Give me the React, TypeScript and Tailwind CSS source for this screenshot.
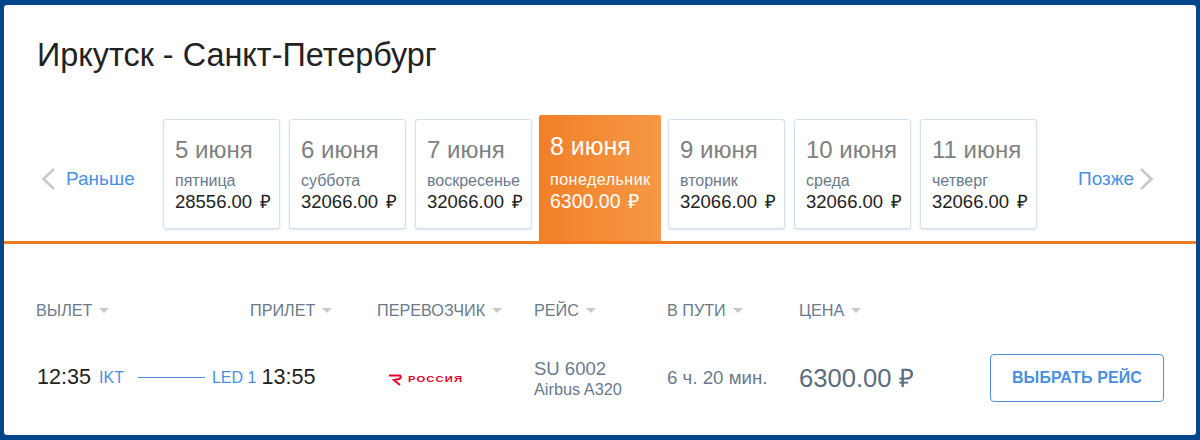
import React from 'react'

const days = [
  { date: '5 июня', day: 'пятница', price: '28556.00 ₽' },
  { date: '6 июня', day: 'суббота', price: '32066.00 ₽' },
  { date: '7 июня', day: 'воскресенье', price: '32066.00 ₽' },
  { date: '8 июня', day: 'понедельник', price: '6300.00 ₽', active: true },
  { date: '9 июня', day: 'вторник', price: '32066.00 ₽' },
  { date: '10 июня', day: 'среда', price: '32066.00 ₽' },
  { date: '11 июня', day: 'четверг', price: '32066.00 ₽' },
]

const Sort = ({ label, className }: { label: string; className: string }) => (
  <div className={`flex items-center gap-[7px] ${className}`}>
    <span>{label}</span>
    <span className="w-0 h-0 border-x-[5px] border-x-transparent border-t-[5px] border-t-[#c8c8c8] mt-[1px]" />
  </div>
)

const App = () => {
  return (
    <div className="w-[1200px] h-[440px] bg-[#04458b] pt-[5px] pb-[5px] px-[4px] font-['Liberation_Sans',Arial,sans-serif] overflow-hidden">
      <div className="h-[430px] bg-white rounded-[3px] flex flex-col">
        <h1 className="pl-[33px] pt-[29px] h-[110px] text-[32.4px] leading-[42px] text-[#222]">
          Иркутск - Санкт-Петербург
        </h1>

        <div className="h-[129px] flex items-start border-b-[3px] border-[#f57a1f]">
          <div className="w-[159px] h-[124px] flex items-center pt-[4px]">
            <svg width="16" height="24" viewBox="0 0 16 24" className="ml-[36px]" fill="none" stroke="#c9c9c9" strokeWidth="2.6">
              <path d="M14 2 L3.5 12 L14 22" />
            </svg>
            <span className="ml-[10px] text-[19px] text-[#4a90e2]">Раньше</span>
          </div>

          <div className="flex items-start">
            {days.map((d) =>
              d.active ? (
                <div
                  key={d.date}
                  className="w-[122px] h-[126px] ml-[7px] mr-[7px] pl-[11px] pt-[14px] rounded-t-[2px] bg-gradient-to-r from-[#f17f27] to-[#f69845] text-white"
                >
                  <div className="text-[25px] leading-[34px] whitespace-nowrap">{d.date}</div>
                  <div className="mt-[7px] text-[16px] tracking-[0.5px] leading-[20px] whitespace-nowrap">{d.day}</div>
                  <div className="text-[19.5px] leading-[22px] [word-spacing:2px] whitespace-nowrap">{d.price}</div>
                </div>
              ) : (
                <div
                  key={d.date}
                  className="w-[117px] h-[110px] mt-[4px] mr-[9px] last:mr-0 [&:nth-child(3)]:mr-0 pl-[11px] pt-[13px] bg-white border border-[#d3e1ee] rounded-[3px] shadow-[0_1px_2px_rgba(120,150,180,0.25)]"
                >
                  <div className="text-[24px] leading-[34px] text-[#808080] whitespace-nowrap">{d.date}</div>
                  <div className="mt-[4px] text-[16px] leading-[20px] text-[#6b7a8c] whitespace-nowrap">{d.day}</div>
                  <div className="text-[18.5px] leading-[22px] text-[#222] [word-spacing:3px] whitespace-nowrap">{d.price}</div>
                </div>
              ),
            )}
          </div>

          <div className="h-[124px] flex items-center pt-[4px] ml-[41px]">
            <span className="text-[19px] text-[#4a90e2]">Позже</span>
            <svg width="16" height="24" viewBox="0 0 16 24" className="ml-[5px]" fill="none" stroke="#c9c9c9" strokeWidth="2.6">
              <path d="M2 2 L12.5 12 L2 22" />
            </svg>
          </div>
        </div>

        <div className="pl-[32px] pt-[56px] flex text-[16.2px] leading-[20px] text-[#6b7a8c]">
          <Sort label="ВЫЛЕТ" className="w-[214px]" />
          <Sort label="ПРИЛЕТ" className="w-[127px]" />
          <Sort label="ПЕРЕВОЗЧИК" className="w-[157px]" />
          <Sort label="РЕЙС" className="w-[133px]" />
          <Sort label="В ПУТИ" className="w-[132px]" />
          <Sort label="ЦЕНА" className="w-[150px]" />
        </div>

        <div className="pl-[33px] mt-[34px] h-[48px] flex items-center">
          <div className="w-[340px] flex items-center pb-[2px]">
            <span className="text-[21.6px] text-[#222]">12:35</span>
            <span className="ml-[8px] text-[16px] text-[#4a90e2] mt-[2px]">IKT</span>
            <span className="ml-[14px] w-[67px] h-px bg-[#4a90e2] shrink-0 mt-[2px]" />
            <span className="ml-[7px] text-[16px] text-[#4a90e2] whitespace-nowrap mt-[2px]">LED 1</span>
            <span className="ml-[5px] text-[21.6px] text-[#222]">13:55</span>
          </div>
          <div className="w-[157px] flex items-center pl-[11px] gap-[4px] pt-[3px]">
            <svg width="16" height="12" viewBox="0 0 16 12" fill="none" stroke="#e4002b" strokeWidth="2">
              <path d="M1 1.5 H12 Q14 3.5 11 5 L6 6 L12 11" />
            </svg>
            <span className="text-[9px] font-bold tracking-[0.9px] scale-x-125 origin-left text-[#e4002b]">РОССИЯ</span>
          </div>
          <div className="w-[133px]">
            <div className="text-[18.5px] leading-[22px] text-[#6b7a8c]">SU 6002</div>
            <div className="text-[16.3px] leading-[18px] text-[#6b7a8c]">Airbus A320</div>
          </div>
          <div className="w-[132px] text-[18.7px] text-[#6b7a8c] whitespace-nowrap">6 ч. 20 мин.</div>
          <div className="w-[191px] text-[25.6px] text-[#5c6b7e]">6300.00 ₽</div>
          <button className="w-[174px] h-[48px] border border-[#4a90e2] rounded-[4px] text-[16px] font-bold tracking-[0.1px] text-[#4a90e2]">
            ВЫБРАТЬ РЕЙС
          </button>
        </div>
      </div>
    </div>
  )
}

export default App
